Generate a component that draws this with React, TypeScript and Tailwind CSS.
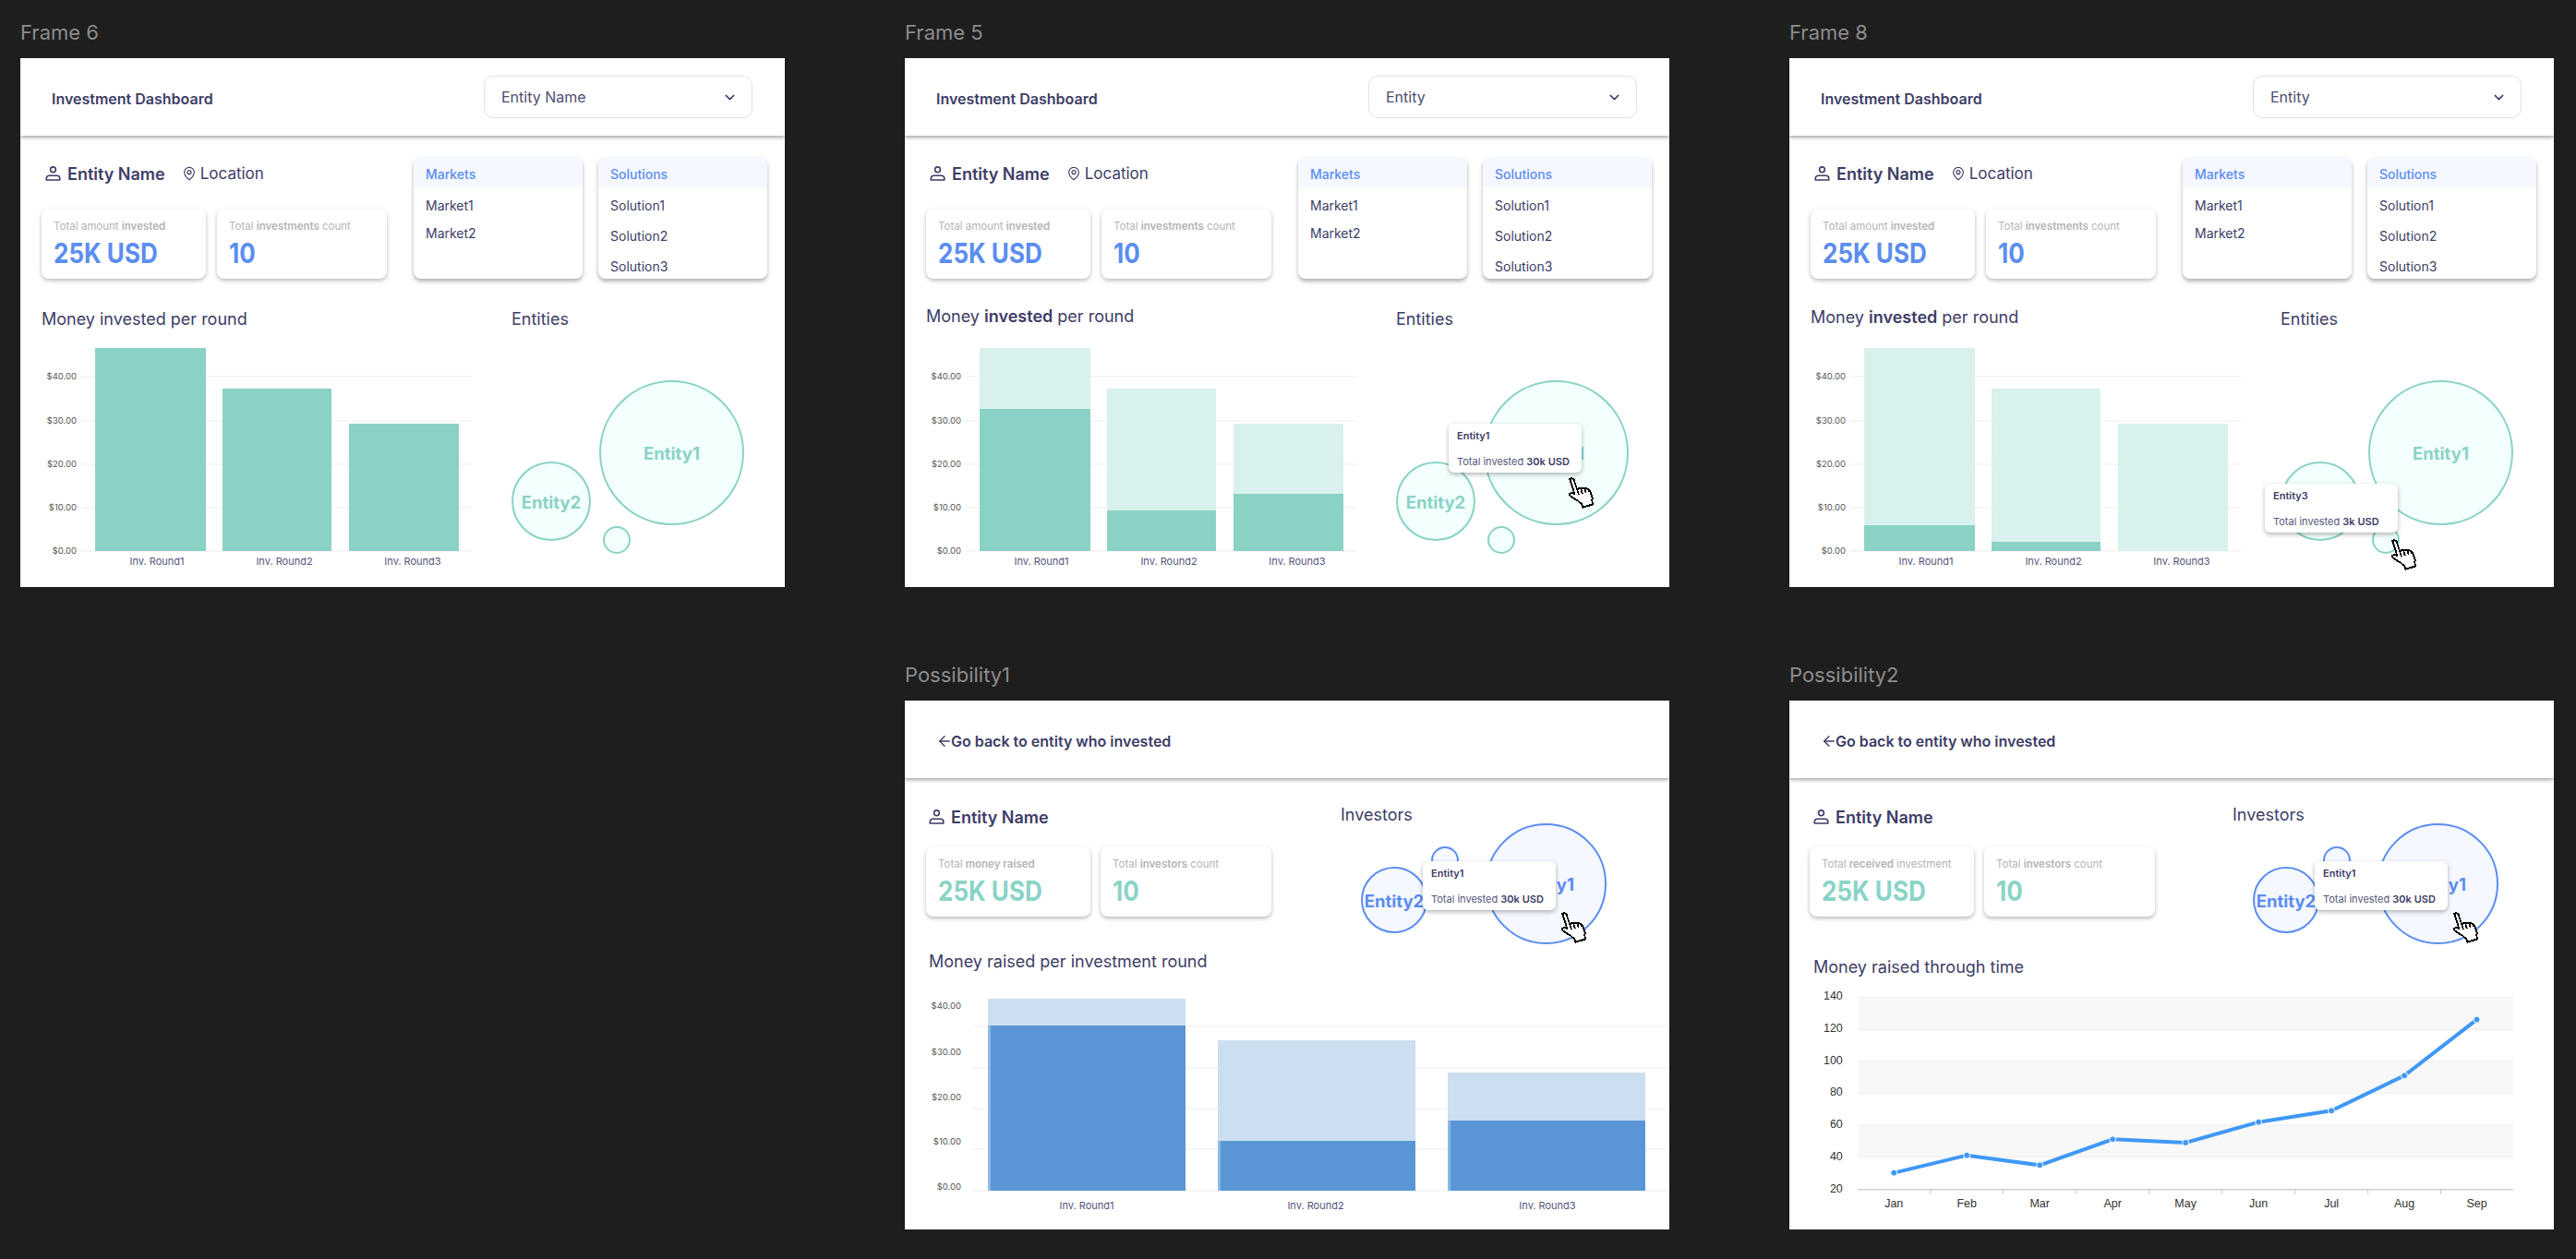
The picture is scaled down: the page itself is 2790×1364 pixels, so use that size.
import React from "react";
import { ChevronDown, MapPin, ArrowLeft } from "lucide-react";

const INK = "#3d3d66";
const Person = () => (
  <svg width="17" height="16" viewBox="0 0 17 16" fill="none" stroke={INK} strokeWidth="1.6" className="shrink-0">
    <circle cx="8.5" cy="3.8" r="2.9" />
    <path d="M1.2 15v-1.6a3.2 3.2 0 0 1 3.2-3.2h8.2a3.2 3.2 0 0 1 3.2 3.2V15z" strokeLinejoin="round" />
  </svg>
);

const Hand = () => (
  <svg width="40" height="42" viewBox="0 0 40 42" className="block overflow-visible" shapeRendering="crispEdges">
    <g transform="translate(-3 1) rotate(-18) scale(1.35 1.6)" fill="#fff" stroke="#000" strokeWidth="1.3">
      <path d="M6 1h2l1 1v7h2l1 .6h2l1 .8h1.500l1 1v1h.5l.5 1v5l-1 1v2.600H9v-2.600l-1-1-1-1.500-1-1-2-2-2-2v-1.500h2l2 1V2z" />
      <path d="M9 9v4M12 9.600V13M15 10.400V13" fill="none" />
    </g>
  </svg>
);

const Tooltip = ({ name, value, pos }: { name: string; value: string; pos: string }) => (
  <div className={`absolute z-10 w-[144px] h-[53px] rounded-md bg-white shadow-[0_2px_5px_rgba(0,0,0,0.3)] pl-[9px] ${pos}`}>
    <div className="absolute top-[6px] text-[11px] leading-[14px] font-semibold text-[#3d3d66]">{name}</div>
    <div className="absolute top-[34px] text-[11px] leading-[14px] text-[#55557a] whitespace-nowrap">
      Total invested <span className="font-semibold text-[#3d3d66]">{value}</span>
    </div>
  </div>
);

const Bubble = ({ pos, size, label, blue }: { pos: string; size: string; label?: string; blue?: boolean }) => (
  <div
    className={`absolute rounded-full border-2 flex items-center justify-center pt-[3px] font-bold whitespace-nowrap text-[18.5px] ${pos} ${size} ${
      blue ? "bg-[#f5f8ff] border-[#5b8def] text-[#5b8def]" : "bg-[#f2fffc] border-[#89d2c5] text-[#8ad2c6]"
    }`}
  >
    {label}
  </div>
);

type Bar = { x0: number; x1: number; top: number; dark: number };

const BarChart = ({ bars, bottom, grid, labelsY, roundXs, roundY, gridX, light, dark, edge, height }: {
  bars: Bar[]; bottom: number; grid: number[]; labelsY: number[]; roundXs: number[]; roundY: number; gridX: number[];
  light: string; dark: string; edge?: string; height: number;
}) => {
  const money = ["$40.00", "$30.00", "$20.00", "$10.00", "$0.00"];
  return (
    <svg width="828" height={height} className="block" style={{ fontFamily: "Inter, sans-serif" }}>
      {grid.map((y) => (
        <line key={y} x1={gridX[0]} x2={gridX[1]} y1={y} y2={y} stroke="#f3f3f3" strokeWidth="1.500" />
      ))}
      {money.map((m, i) => (
        <text key={m} x="61" y={labelsY[i] + 3} textAnchor="end" fontSize="9.500" fill="#555">{m}</text>
      ))}
      {bars.map((b, i) => (
        <g key={i}>
          <rect x={b.x0} y={b.top} width={b.x1 - b.x0} height={bottom - b.top} fill={light} />
          <rect x={b.x0} y={b.dark} width={b.x1 - b.x0} height={bottom - b.dark} fill={dark} />
          {edge && <rect x={b.x0} y={b.dark} width="3" height={bottom - b.dark} fill={edge} />}
          <text x={roundXs[i]} y={roundY + 4} textAnchor="middle" fontSize="11" fill="#55557a">{`Inv. Round${i + 1}`}</text>
        </g>
      ))}
    </svg>
  );
};

const LineChart = () => {
  const X = (z: number) => z * 0.5485 - 8;
  const Y = (v: number) => v / 3 - 32;
  const gridV = [151, 257, 358, 464, 567, 670];
  const bands = [[151, 257], [358, 464], [567, 670]];
  const ys = ["140", "120", "100", "80", "60", "40", "20"];
  const ysV = [146, 250, 354, 458, 562, 666, 771];
  const ticks = [293, 437, 581, 725, 869, 1013, 1157, 1301];
  const months = ["Jan", "Feb", "Mar", "Apr", "May", "Jun", "Jul", "Aug", "Sep"];
  const monthZ = [221, 365, 509, 653, 797, 941, 1085, 1229, 1372];
  const pts = [[221, 722], [365, 665], [509, 697], [653, 613], [797, 624], [941, 557], [1085, 520], [1229, 406], [1372, 224]];
  return (
    <svg width="828" height="267" className="block" style={{ fontFamily: "'Liberation Sans', Arial, sans-serif" }}>
      {bands.map(([a, b]) => (
        <rect key={a} x={X(150)} y={Y(a)} width={X(1444) - X(150)} height={Y(b) - Y(a)} fill="#f8f8f8" />
      ))}
      {gridV.map((v) => (
        <line key={v} x1={X(150)} x2={X(1444)} y1={Y(v)} y2={Y(v)} stroke="#eeeeee" strokeWidth="1" />
      ))}
      <line x1={X(150)} x2={X(1444)} y1={Y(776)} y2={Y(776)} stroke="#c9d1d9" strokeWidth="1.500" />
      {ticks.map((z) => (
        <line key={z} x1={X(z)} x2={X(z)} y1={Y(776)} y2={Y(776) + 5} stroke="#c0c8d0" strokeWidth="1" />
      ))}
      {ys.map((t, i) => (
        <text key={t} x={X(120)} y={Y(ysV[i]) + 4.500} textAnchor="end" fontSize="12.500" fill="#333">{t}</text>
      ))}
      {months.map((m, i) => (
        <text key={m} x={X(monthZ[i])} y={Y(821) + 4.500} textAnchor="middle" fontSize="12.500" fill="#333">{m}</text>
      ))}
      <polyline points={pts.map(([a, b]) => `${X(a)},${Y(b)}`).join(" ")} fill="none" stroke="#3f98f5" strokeWidth="4" />
      {pts.map(([a, b]) => (
        <circle key={a} cx={X(a)} cy={Y(b)} r="3.500" fill="#3f98f5" stroke="#fff" strokeWidth="1" />
      ))}
    </svg>
  );
};

const StatCard = ({ width, label, value, color }: { width: string; label: React.ReactNode; value: string; color: string }) => (
  <div className={`h-[76px] rounded-lg bg-white shadow-[0_2px_4px_rgba(0,0,0,0.28)] pl-[13px] pt-[11px] ${width}`}>
    <div className="h-[16px] text-[11.5px] leading-[16px] text-[#b4b4b4] whitespace-nowrap">{label}</div>
    <div className={`mt-[5px] h-[34px] text-[26px] leading-[34px] font-bold origin-left scale-y-115 ${color}`}>{value}</div>
  </div>
);

const ListCard = ({ title, items, gap }: { title: string; items: string[]; gap: string }) => (
  <div className="w-[183px] h-[132px] rounded-lg bg-white overflow-hidden shadow-[0_3px_4px_rgba(0,0,0,0.3)]">
    <div className="h-[33px] bg-[#f5f8ff] pl-[13px] pt-[4px] flex items-center text-[14px] font-medium text-[#5b8def]">{title}</div>
    <div className={`pl-[13px] pt-[10px] flex flex-col text-[14px] leading-[20px] text-[#3d3d66] ${gap}`}>
      {items.map((i) => <div key={i}>{i}</div>)}
    </div>
  </div>
);

const Frame = ({ label, children }: { label: string; children: React.ReactNode }) => (
  <div>
    <div className="h-[24px] mb-[16px] text-[22px] leading-[24px] text-[#8c8c8c]">{label}</div>
    <div className="w-[828px] h-[573px] bg-white overflow-hidden flex flex-col">{children}</div>
  </div>
);

const Header = ({ children }: { children: React.ReactNode }) => (
  <div className="relative z-20 h-[84px] shrink-0 bg-white shadow-[0_2px_4px_rgba(0,0,0,0.35)] flex items-center justify-between pl-[34px] pr-[35px]">
    {children}
  </div>
);

const DASH_GRID = [48, 96, 143, 190, 237];
const dashBars = (t: [number, number, number]): Bar[] => [
  { x0: 81, x1: 201, top: 17, dark: t[0] },
  { x0: 219, x1: 337, top: 61, dark: t[1] },
  { x0: 356, x1: 475, top: 99, dark: t[2] },
];

const Dashboard = ({ label, select, heading, headingShift, bars, light, overlay }: {
  label: string; select: string; heading: React.ReactNode; headingShift: string; bars: Bar[]; light: string; overlay?: React.ReactNode;
}) => (
  <Frame label={label}>
    <Header>
      <div className="mt-[4px] text-[16px] font-semibold text-[#3d3d66]">Investment Dashboard</div>
      <div className="w-[291px] h-[46px] rounded-[10px] border border-[#e2e2e2] bg-white flex items-center justify-between pl-[18px] pr-[15px] text-[16px] text-[#4d4d70]">
        {select}
        <ChevronDown size={17} color="#3d3d66" strokeWidth={2} />
      </div>
    </Header>
    <div className="flex pt-[23px] pl-[23px]">
      <div className="w-[403px]">
        <div className="h-[36px] flex items-center pl-[4px] text-[#3d3d66]">
          <Person />
          <span className="ml-[7px] text-[18px] font-semibold">Entity Name</span>
          <MapPin size={16} color="#3d3d66" strokeWidth={1.700} className="ml-[18px]" />
          <span className="ml-[4px] text-[17px] pt-[1px]">Location</span>
        </div>
        <div className="mt-[20px] flex gap-[12px]">
          <StatCard width="w-[178px]" color="text-[#5b8def]" value="25K USD" label={<>Total amount <b className="font-semibold">invested</b></>} />
          <StatCard width="w-[184px]" color="text-[#5b8def]" value="10" label={<>Total <b className="font-semibold">investments</b> count</>} />
        </div>
      </div>
      <div className="flex gap-[17px]">
        <ListCard title="Markets" items={["Market1", "Market2"]} gap="gap-[10px]" />
        <ListCard title="Solutions" items={["Solution1", "Solution2", "Solution3"]} gap="gap-[13px]" />
      </div>
    </div>
    <div className="mt-[30px] flex">
      <div className="w-[532px] shrink-0">
        <div className={`h-[28px] pl-[23px] text-[18px] leading-[28px] text-[#3d3d66] ${headingShift}`}>{heading}</div>
        <BarChart bars={bars} bottom={237} grid={DASH_GRID} labelsY={DASH_GRID} roundXs={[148, 286, 425]} roundY={248} gridX={[66, 489]} light={light} dark="#8ad2c6" height={270} />
      </div>
      <div className="relative flex-1 h-[298px]">
        <div className="h-[28px] text-[18px] leading-[28px] text-[#3d3d66]">Entities</div>
        <Bubble pos="left-[95px] top-[80px]" size="w-[157px] h-[157px]" label="Entity1" />
        <Bubble pos="left-[0px] top-[168px]" size="w-[86px] h-[86px]" label="Entity2" />
        <Bubble pos="left-[99px] top-[238px]" size="w-[30px] h-[30px]" />
        {overlay}
      </div>
    </div>
  </Frame>
);

const Possibility = ({ label, cardLabel, colWidth, headingGap, heading, cardShift, chart }: {
  label: string; cardLabel: React.ReactNode; colWidth: string; headingGap: string; heading: string; cardShift: string; chart: React.ReactNode;
}) => (
  <Frame label={label}>
    <Header>
      <div className="mt-[4px] flex items-center text-[16px] font-semibold text-[#3d3d66]">
        <ArrowLeft size={18} strokeWidth={1.800} color="#3d3d66" className="mr-[-2px]" />
        Go back to entity who invested
      </div>
    </Header>
    <div className="flex pt-[24px] pl-[23px]">
      <div className={`shrink-0 ${colWidth}`}>
        <div className="h-[36px] flex items-center pl-[3px] text-[18px] font-semibold text-[#3d3d66]">
          <Person />
          <span className="ml-[7px]">Entity Name</span>
        </div>
        <div className={`mt-[14px] flex gap-[11px] ${cardShift}`}>
          <StatCard width="w-[178px]" color="text-[#8ad4c7]" value="25K USD" label={cardLabel} />
          <StatCard width="w-[185px]" color="text-[#8ad4c7]" value="10" label={<>Total <b className="font-semibold">investors</b> count</>} />
        </div>
      </div>
      <div className="relative flex-1 h-[120px] mt-[2px]">
        <div className="h-[28px] text-[18px] leading-[28px] text-[#3d3d66]">Investors</div>
        <Bubble blue pos="left-[157px] top-[23px]" size="w-[131px] h-[131px]" label="Entity1" />
        <Bubble blue pos="left-[22px] top-[70px]" size="w-[72px] h-[72px]" label="Entity2" />
        <Bubble blue pos="left-[98px] top-[48px]" size="w-[30px] h-[30px]" />
        <Tooltip name="Entity1" value="30k USD" pos="left-[89px] top-[64px]" />
        <div className="absolute z-10 left-[235px] top-[121px]"><Hand /></div>
      </div>
    </div>
    <div className={`h-[28px] pl-[26px] text-[18px] leading-[28px] text-[#3d3d66] ${headingGap}`}>{heading}</div>
    {chart}
  </Frame>
);

export default function App() {
  return (
    <div className="w-[2790px] h-[1364px] overflow-hidden bg-[#1e1e1e] pl-[22px] pt-[23px] [font-family:Inter,sans-serif]">
      <div className="grid grid-cols-[828px_828px_828px] gap-x-[130px] gap-y-[83px]">
        <Dashboard
          label="Frame 6"
          select="Entity Name"
          heading="Money invested per round"
          headingShift=""
          light="#d8f1ed"
          bars={dashBars([17, 61, 99])}
        />
        <Dashboard
          label="Frame 5"
          select="Entity"
          heading={<>Money <b className="font-semibold">invested</b> per round</>}
          headingShift="mt-[-3px] mb-[3px]"
          light="#d8f1ed"
          bars={dashBars([83, 193, 175])}
          overlay={
            <>
              <Tooltip name="Entity1" value="30k USD" pos="left-[57px] top-[127px]" />
              <div className="absolute z-10 left-[183px] top-[187px]"><Hand /></div>
            </>
          }
        />
        <Dashboard
          label="Frame 8"
          select="Entity"
          heading={<>Money <b className="font-semibold">invested</b> per round</>}
          headingShift="mt-[-2px] mb-[2px]"
          light="#d8f1ed"
          bars={dashBars([209, 227, 237])}
          overlay={
            <>
              <Tooltip name="Entity3" value="3k USD" pos="left-[-17px] top-[192px]" />
              <div className="absolute z-10 left-[116px] top-[254px]"><Hand /></div>
            </>
          }
        />
        <div />
        <Possibility
          label="Possibility1"
          colWidth="w-[449px]"
          cardShift=""
          headingGap="mt-[35px]"
          heading="Money raised per investment round"
          cardLabel={<>Total <b className="font-semibold">money raised</b></>}
          chart={
            <BarChart
              bars={[
                { x0: 90, x1: 304, top: 26, dark: 55 },
                { x0: 339, x1: 553, top: 71, dark: 180 },
                { x0: 588, x1: 802, top: 106, dark: 158 },
              ]}
              bottom={234}
              grid={[56, 101, 145, 189, 234]}
              labelsY={[34, 84, 133, 181, 230]}
              roundXs={[197, 445, 696]}
              roundY={250}
              gridX={[72, 828]}
              light="#cbdff0"
              dark="#5a96d5"
              edge="#8db8e3"
              height={270}
            />
          }
        />
        <Possibility
          label="Possibility2"
          colWidth="w-[457px]"
          cardShift="ml-[-1px]"
          headingGap="mt-[41px]"
          heading="Money raised through time"
          cardLabel={<>Total <b className="font-semibold">received</b> investment</>}
          chart={<LineChart />}
        />
      </div>
    </div>
  );
}
